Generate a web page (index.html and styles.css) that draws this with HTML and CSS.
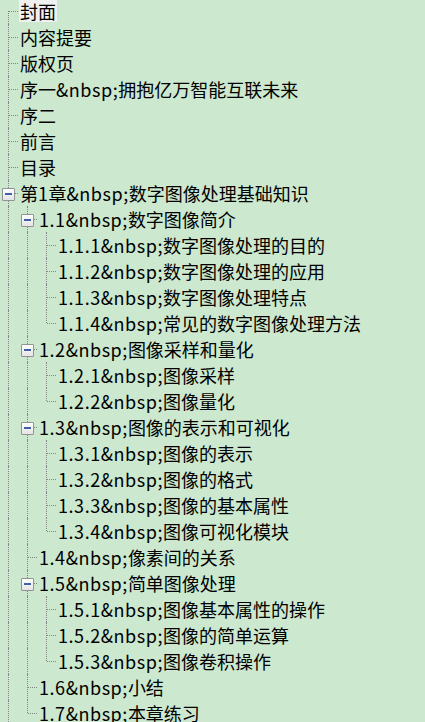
FILE: index.html
```html
<!DOCTYPE html>
<html lang="zh-CN">
<head>
<meta charset="utf-8">
<title>目录</title>
<link rel="stylesheet" href="styles.css">
</head>
<body>
<div class="tree">
  <div class="row"><span class="cell first"></span><span class="label selected">封面</span></div>
  <div class="row"><span class="cell tee"></span><span class="label">内容提要</span></div>
  <div class="row"><span class="cell tee"></span><span class="label">版权页</span></div>
  <div class="row"><span class="cell tee"></span><span class="label">序一<span class="n">&amp;nbsp;</span>拥抱亿万智能互联未来</span></div>
  <div class="row"><span class="cell tee"></span><span class="label">序二</span></div>
  <div class="row"><span class="cell tee"></span><span class="label">前言</span></div>
  <div class="row"><span class="cell tee"></span><span class="label">目录</span></div>
  <div class="row"><span class="cell tee"><i class="box"></i></span><span class="label">第<span class="n">1</span>章<span class="n">&amp;nbsp;</span>数字图像处理基础知识</span></div>

  <div class="row"><span class="cell pipe"></span><span class="cell tee"><i class="box"></i></span><span class="label"><span class="n">1.1&amp;nbsp;</span>数字图像简介</span></div>
  <div class="row"><span class="cell pipe"></span><span class="cell pipe"></span><span class="cell tee"></span><span class="label"><span class="n">1.1.1&amp;nbsp;</span>数字图像处理的目的</span></div>
  <div class="row"><span class="cell pipe"></span><span class="cell pipe"></span><span class="cell tee"></span><span class="label"><span class="n">1.1.2&amp;nbsp;</span>数字图像处理的应用</span></div>
  <div class="row"><span class="cell pipe"></span><span class="cell pipe"></span><span class="cell tee"></span><span class="label"><span class="n">1.1.3&amp;nbsp;</span>数字图像处理特点</span></div>
  <div class="row"><span class="cell pipe"></span><span class="cell pipe"></span><span class="cell elbow"></span><span class="label"><span class="n">1.1.4&amp;nbsp;</span>常见的数字图像处理方法</span></div>

  <div class="row"><span class="cell pipe"></span><span class="cell tee"><i class="box"></i></span><span class="label"><span class="n">1.2&amp;nbsp;</span>图像采样和量化</span></div>
  <div class="row"><span class="cell pipe"></span><span class="cell pipe"></span><span class="cell tee"></span><span class="label"><span class="n">1.2.1&amp;nbsp;</span>图像采样</span></div>
  <div class="row"><span class="cell pipe"></span><span class="cell pipe"></span><span class="cell elbow"></span><span class="label"><span class="n">1.2.2&amp;nbsp;</span>图像量化</span></div>

  <div class="row"><span class="cell pipe"></span><span class="cell tee"><i class="box"></i></span><span class="label"><span class="n">1.3&amp;nbsp;</span>图像的表示和可视化</span></div>
  <div class="row"><span class="cell pipe"></span><span class="cell pipe"></span><span class="cell tee"></span><span class="label"><span class="n">1.3.1&amp;nbsp;</span>图像的表示</span></div>
  <div class="row"><span class="cell pipe"></span><span class="cell pipe"></span><span class="cell tee"></span><span class="label"><span class="n">1.3.2&amp;nbsp;</span>图像的格式</span></div>
  <div class="row"><span class="cell pipe"></span><span class="cell pipe"></span><span class="cell tee"></span><span class="label"><span class="n">1.3.3&amp;nbsp;</span>图像的基本属性</span></div>
  <div class="row"><span class="cell pipe"></span><span class="cell pipe"></span><span class="cell elbow"></span><span class="label"><span class="n">1.3.4&amp;nbsp;</span>图像可视化模块</span></div>

  <div class="row"><span class="cell pipe"></span><span class="cell tee"></span><span class="label"><span class="n">1.4&amp;nbsp;</span>像素间的关系</span></div>

  <div class="row"><span class="cell pipe"></span><span class="cell tee"><i class="box"></i></span><span class="label"><span class="n">1.5&amp;nbsp;</span>简单图像处理</span></div>
  <div class="row"><span class="cell pipe"></span><span class="cell pipe"></span><span class="cell tee"></span><span class="label"><span class="n">1.5.1&amp;nbsp;</span>图像基本属性的操作</span></div>
  <div class="row"><span class="cell pipe"></span><span class="cell pipe"></span><span class="cell tee"></span><span class="label"><span class="n">1.5.2&amp;nbsp;</span>图像的简单运算</span></div>
  <div class="row"><span class="cell pipe"></span><span class="cell pipe"></span><span class="cell elbow"></span><span class="label"><span class="n">1.5.3&amp;nbsp;</span>图像卷积操作</span></div>

  <div class="row"><span class="cell pipe"></span><span class="cell tee"></span><span class="label"><span class="n">1.6&amp;nbsp;</span>小结</span></div>
  <div class="row"><span class="cell pipe"></span><span class="cell elbow"></span><span class="label"><span class="n">1.7&amp;nbsp;</span>本章练习</span></div>
</div>
</body>
</html>
```

FILE: styles.css
```css
html, body {
  margin: 0;
  padding: 0;
  background: #cce8cf;
  overflow: hidden;
}

body {
  font-family: "Noto Sans CJK SC", "Microsoft YaHei", "Noto Sans", sans-serif;
  font-size: 18px;
  color: #000;
}

.tree {
  margin-top: -2px;
}

.row {
  display: flex;
  align-items: center;
  height: 26px;
  white-space: nowrap;
}

.cell {
  position: relative;
  flex: none;
  width: 19px;
  height: 26px;
}

/* vertical connector */
.cell::before {
  content: "";
  position: absolute;
  left: 8px;
  border-left: 1px dotted #858585;
}

.pipe::before,
.tee::before {
  top: 0;
  bottom: 0;
}

.elbow::before {
  top: 0;
  height: 13px;
}

.first::before {
  top: 13px;
  bottom: 0;
}

/* horizontal connector */
.tee::after,
.elbow::after,
.first::after {
  content: "";
  position: absolute;
  left: 9px;
  top: 13px;
  width: 9px;
  border-top: 1px dotted #858585;
}

/* expand / collapse box */
.box {
  position: absolute;
  z-index: 1;
  left: 2px;
  top: 8px;
  width: 11px;
  height: 11px;
  border: 1px solid #939393;
  border-radius: 1px;
  background: linear-gradient(#ffffff, #e4e4e4);
}

.box::after {
  content: "";
  position: absolute;
  left: 2px;
  top: 4px;
  width: 7px;
  height: 2px;
  background: #4060aa;
}

.label {
  height: 22px;
  line-height: 22px;
  padding: 0 1px;
}

/* latin runs are spaced a little wider, as in the hinted system font */
.n {
  letter-spacing: 0.55px;
}

.selected {
  background: #f0f0f0;
}
```
